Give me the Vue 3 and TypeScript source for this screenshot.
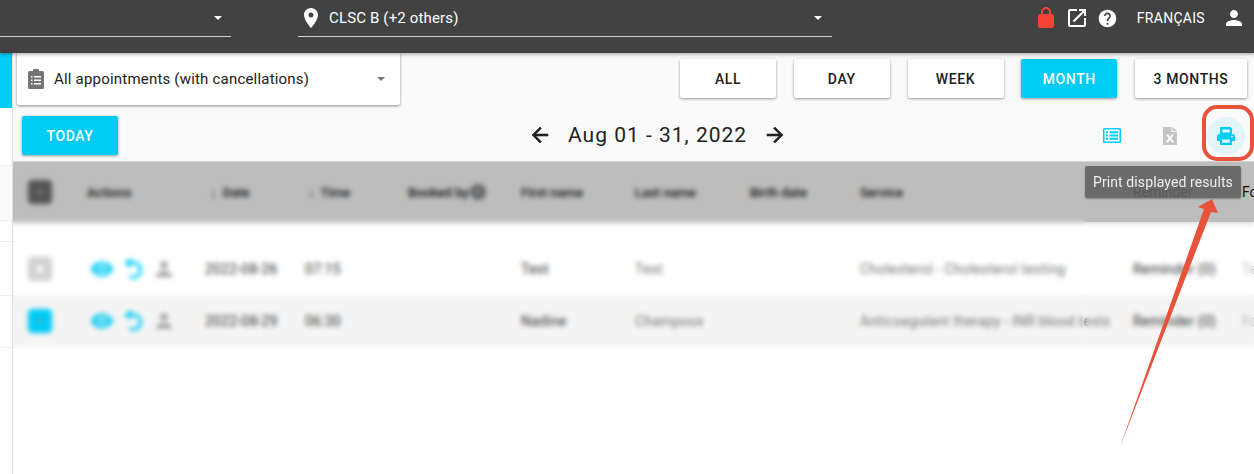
<script setup lang="ts">
const viewButtons = [
  { label: 'ALL', width: 96 },
  { label: 'DAY', width: 96 },
  { label: 'WEEK', width: 96 },
  { label: 'MONTH', width: 96, active: true },
  { label: '3 MONTHS', width: 112 },
]

const columns = ['↓ Date', '↓ Time']
const laterColumns = ['First name', 'Last name', 'Birth date', 'Service']

const rows = [
  { checked: false, date: '2022-08-26', time: '07:15', first: 'Test', last: 'Test', service: 'Cholesterol - Cholesterol testing', reminder: 'Reminder (0)', tail: 'Test' },
  { checked: true, date: '2022-08-29', time: '06:30', first: 'Nadine', last: 'Champoux', service: 'Anticoagulant therapy - INR blood tests', reminder: 'Reminder (0)', tail: 'Fo' },
]

const icons = {
  place: 'M12 2C8.13 2 5 5.13 5 9c0 5.25 7 13 7 13s7-7.75 7-13c0-3.87-3.13-7-7-7zm0 9.5c-1.38 0-2.5-1.12-2.5-2.5s1.12-2.5 2.5-2.5 2.5 1.12 2.5 2.5-1.12 2.5-2.5 2.5z',
  lock: 'M18 8h-1V6c0-2.76-2.24-5-5-5S7 3.24 7 6v2H6c-1.1 0-2 .9-2 2v10c0 1.1.9 2 2 2h12c1.1 0 2-.9 2-2V10c0-1.1-.9-2-2-2zM9 8V6c0-1.66 1.34-3 3-3s3 1.34 3 3v2H9z',
  open: 'M19 19H5V5h7V3H5c-1.11 0-2 .9-2 2v14c0 1.1.89 2 2 2h14c1.1 0 2-.9 2-2v-7h-2v7zM14 3v2h3.59l-9.83 9.83 1.41 1.41L19 6.41V10h2V3h-7z',
  help: 'M12 2C6.48 2 2 6.48 2 12s4.48 10 10 10 10-4.48 10-10S17.52 2 12 2zm1 17h-2v-2h2v2zm2.07-7.75l-.9.92C13.45 12.9 13 13.5 13 15h-2v-.5c0-1.1.45-2.1 1.17-2.83l1.24-1.26c.37-.36.59-.86.59-1.41 0-1.1-.9-2-2-2s-2 .9-2 2H8c0-2.21 1.79-4 4-4s4 1.79 4 4c0 .88-.36 1.68-.93 2.25z',
  person: 'M12 12c2.21 0 4-1.79 4-4s-1.79-4-4-4-4 1.79-4 4 1.79 4 4 4zm0 2c-2.67 0-8 1.34-8 4v2h16v-2c0-2.66-5.33-4-8-4z',
  back: 'M20 11H7.83l5.59-5.59L12 4l-8 8 8 8 1.41-1.41L7.83 13H20v-2z',
  forward: 'M12 4l-1.41 1.41L16.17 11H4v2h12.17l-5.58 5.59L12 20l8-8z',
  eye: 'M12 4.5C7 4.5 2.73 7.61 1 12c1.73 4.39 6 7.5 11 7.5s9.27-3.11 11-7.5c-1.73-4.39-6-7.5-11-7.5zM12 17a5 5 0 1 1 0-10 5 5 0 0 1 0 10zm0-8a3 3 0 1 0 0 6 3 3 0 0 0 0-6z',
  replay: 'M10 4V1L3 6l7 5V7h2c3.31 0 6 2.69 6 6s-2.69 6-6 6c-1 0-2-.2-2.800-.7l-1.400 1.800C9.100 21.600 10.500 22 12 22c4.970 0 9-4.030 9-9s-4.030-9-9-9h-2z',
}
</script>

<template>
  <div class="page">
    <header class="topbar">
      <div class="top-select first">
        <span class="caret"></span>
      </div>
      <div class="top-select second">
        <svg class="place" viewBox="0 0 24 24"><path :d="icons.place" /></svg>
        <span class="top-value">CLSC B (+2 others)</span>
        <span class="caret"></span>
      </div>
      <div class="top-actions">
        <svg class="top-icon lock" viewBox="0 0 24 24"><path :d="icons.lock" /></svg>
        <svg class="top-icon open" viewBox="0 0 24 24"><path :d="icons.open" /></svg>
        <svg class="top-icon help" viewBox="0 0 24 24"><path :d="icons.help" /></svg>
        <span class="lang">FRANÇAIS</span>
        <svg class="top-icon person" viewBox="0 0 24 24"><path :d="icons.person" /></svg>
      </div>
    </header>

    <div class="layout">
      <aside class="sidebar">
        <div class="side-accent"></div>
        <div class="side-block"></div>
        <div class="side-line one"></div>
        <div class="side-line two"></div>
        <div class="side-line three"></div>
      </aside>

      <main class="content">
        <section class="toolbar">
          <div class="toolbar-row upper">
            <div class="filter">
              <svg class="clipboard" viewBox="0 0 16 20">
                <path fill-rule="evenodd" d="M5 2a3 3 0 0 1 6 0h3.500A1.500 1.500 0 0 1 16 3.500v15a1.500 1.500 0 0 1-1.500 1.500h-13A1.500 1.500 0 0 1 0 18.500v-15A1.500 1.500 0 0 1 1.500 2H5zM3 7v1.500h1.500V7H3zm3 0v1.500h7V7H6zm-3 3.500V12h1.500v-1.500H3zm3 0V12h7v-1.500H6zM3 14v1.500h1.500V14H3zm3 0v1.500h7V14H6z" />
              </svg>
              <span class="filter-value">All appointments (with cancellations)</span>
              <span class="caret small"></span>
            </div>
            <div class="views">
              <button
                v-for="b in viewButtons"
                :key="b.label"
                type="button"
                :class="['btn', { active: b.active }]"
                :style="{ width: b.width + 'px' }"
              >{{ b.label }}</button>
            </div>
          </div>

          <div class="toolbar-row lower">
            <button type="button" class="btn active today">TODAY</button>
            <div class="period">
              <svg class="nav-arrow" viewBox="0 0 24 24"><path :d="icons.back" /></svg>
              <span class="period-label">Aug 01 - 31, 2022</span>
              <svg class="nav-arrow" viewBox="0 0 24 24"><path :d="icons.forward" /></svg>
            </div>
            <div class="exports">
              <div class="export-slot">
                <svg class="list-icon" viewBox="0 0 18 15">
                  <path fill-rule="evenodd" d="M1.500 0h15A1.500 1.500 0 0 1 18 1.500v12a1.500 1.500 0 0 1-1.500 1.500h-15A1.500 1.500 0 0 1 0 13.500v-12A1.500 1.500 0 0 1 1.500 0zm0 1.500v12h15v-12h-15zM3 3.200h2v2H3v-2zm3.500 0H15v2H6.500v-2zM3 6.500h2v2H3v-2zm3.500 0H15v2H6.500v-2zM3 9.800h2v2H3v-2zm3.500 0H15v2H6.500v-2z" />
                </svg>
              </div>
              <div class="export-slot">
                <svg class="excel-icon" viewBox="0 0 14 18">
                  <path fill-rule="evenodd" d="M0 0h8.500v5H14v13H0V0zm9.500 0L14 4H9.500V0zM2.800 7.500l2.800 3.700L2.600 15.500h2.600L7 12.700l1.800 2.800h2.600l-3-4.300 2.800-3.700H8.600L7 9.800 5.400 7.500H2.800z" />
                </svg>
              </div>
              <div class="export-slot print">
                <svg class="print-icon" viewBox="0 0 18 18">
                  <path fill-rule="evenodd" d="M3 0h10.500L15 1.500V7h.500A2.500 2.500 0 0 1 18 9.500V14h-3v4H3v-4H0V9.500A2.500 2.500 0 0 1 2.500 7H3V0zm2.200 2.400v3.200h7.600V2.400H5.200zm0 10.100v3.300h7.600v-3.300H5.200zM15 8.500a1 1 0 1 0 0 2 1 1 0 0 0 0-2z" />
                </svg>
              </div>
            </div>
          </div>
        </section>

        <section class="table">
          <div class="grid head">
            <div class="cell"><span class="check head-check"></span></div>
            <div class="cell">Actions</div>
            <div v-for="c in columns" :key="c" class="cell sorted">{{ c }}</div>
            <div class="cell booked">Booked by<span class="info">i</span></div>
            <div v-for="c in laterColumns" :key="c" class="cell">{{ c }}</div>
            <div class="cell reminder-head">Reminder</div>
            <div class="cell form-head">Fo</div>
          </div>
          <div class="spacer"></div>
          <div v-for="(r, i) in rows" :key="r.date" :class="['grid', 'row', { alt: i % 2 === 1 }]">
            <div class="cell"><span :class="['check', { on: r.checked }]"></span></div>
            <div class="cell actions">
              <svg class="act cyan" viewBox="0 0 24 24"><path :d="icons.eye" /></svg>
              <svg class="act cyan" viewBox="0 0 24 24"><path :d="icons.replay" /></svg>
              <svg class="act grey" viewBox="0 0 24 24"><path :d="icons.person" /></svg>
            </div>
            <div class="cell strong date">{{ r.date }}</div>
            <div class="cell strong time">{{ r.time }}</div>
            <div class="cell"></div>
            <div class="cell strong">{{ r.first }}</div>
            <div class="cell light">{{ r.last }}</div>
            <div class="cell"></div>
            <div class="cell light">{{ r.service }}</div>
            <div class="cell strong">{{ r.reminder }}</div>
            <div class="cell faint">{{ r.tail }}</div>
          </div>
        </section>
      </main>
    </div>

    <!-- patient data is blurred on top of the table -->
    <div class="mask mask-main"></div>
    <div class="mask mask-right"></div>

    <div class="tooltip">Print displayed results</div>
    <svg class="annotation" viewBox="0 0 1254 474">
      <rect x="1204" y="107" width="48" height="52" rx="13" fill="none" stroke="#e8523a" stroke-width="4" />
      <path d="M1212 199L1198 207L1204 209L1120 447L1211 212L1218 213Z" fill="#e8523a" />
    </svg>
  </div>
</template>

<style>
html,
body {
  margin: 0;
  background: #fff;
}
</style>

<style scoped>
.page {
  position: relative;
  width: 1254px;
  height: 474px;
  overflow: hidden;
  background: #fff;
  font-family: Roboto, 'Liberation Sans', sans-serif;
  color: #212121;
}

.topbar {
  position: relative;
  z-index: 2;
  display: flex;
  height: 53px;
  background: #424242;
  box-shadow: 0 1px 4px rgba(0, 0, 0, 0.4);
  color: #fff;
}

.top-select {
  display: flex;
  align-items: center;
  height: 37px;
  box-sizing: border-box;
  border-bottom: 1px solid #d0d0d0;
}

.top-select.first {
  width: 231px;
  justify-content: flex-end;
  padding-right: 9px;
}

.top-select.second {
  width: 534px;
  margin-left: 67px;
  padding: 0 10px 0 1px;
}

.place {
  width: 24px;
  height: 24px;
  fill: #fff;
}

.top-value {
  flex: 1;
  margin-left: 6px;
  font-size: 15px;
  letter-spacing: 0.15px;
}

.caret {
  width: 0;
  height: 0;
  border-left: 4px solid transparent;
  border-right: 4px solid transparent;
  border-top: 4px solid #fff;
}

.caret.small {
  border-top-color: #757575;
}

.top-actions {
  display: flex;
  align-items: center;
  height: 36px;
  margin-left: auto;
  padding-right: 8px;
}

.top-icon {
  flex: none;
  width: 24px;
  height: 24px;
  fill: #fff;
}

.top-icon.lock {
  margin-right: 7px;
  fill: #f44336;
}

.top-icon.open {
  margin-right: 8px;
}

.top-icon.help {
  width: 21px;
  height: 21px;
  margin-right: 19px;
}

.lang {
  margin-right: 17px;
  font-size: 14px;
  letter-spacing: 0.3px;
}

.layout {
  display: flex;
  height: 421px;
}

.sidebar {
  position: relative;
  flex: none;
  width: 12px;
  border-right: 1px solid #e0e0e0;
}

.side-accent {
  height: 55px;
  background: #00ccf5;
}

.side-block {
  position: absolute;
  top: 112px;
  left: 0;
  width: 12px;
  height: 56px;
  box-sizing: border-box;
  border-top: 1px solid #efefef;
  border-bottom: 1px solid #efefef;
  background: #fafafa;
}

.side-line {
  position: absolute;
  left: 0;
  width: 12px;
  height: 1px;
  background: #efefef;
}

.side-line.one { top: 188px; }
.side-line.two { top: 242px; }
.side-line.three { top: 294px; }

.content {
  flex: 1;
  min-width: 0;
}

.toolbar {
  display: flex;
  flex-direction: column;
  height: 109px;
  box-sizing: border-box;
  background: #fafafa;
  border-bottom: 1px solid #dcdcdc;
}

.toolbar-row {
  display: flex;
}

.upper {
  align-items: flex-start;
  height: 63px;
  padding: 0 7px 0 4px;
}

.filter {
  display: flex;
  align-items: center;
  width: 383px;
  height: 52px;
  box-sizing: border-box;
  padding: 0 15px 0 11px;
  background: #fff;
  border-radius: 0 0 2px 2px;
  box-shadow: 0 1px 3px rgba(0, 0, 0, 0.45);
}

.clipboard {
  width: 16px;
  height: 20px;
  fill: #757575;
}

.filter-value {
  flex: 1;
  margin-left: 10px;
  font-size: 15px;
  letter-spacing: 0.2px;
}

.views {
  display: flex;
  gap: 17.75px;
  margin: 6px 0 0 auto;
}

.btn {
  height: 39px;
  padding: 0;
  border: 0;
  border-radius: 2px;
  background: #fff;
  color: #212121;
  font: 500 14px Roboto, sans-serif;
  letter-spacing: 0.6px;
  box-shadow: 0 1px 3px rgba(0, 0, 0, 0.4);
}

.btn.active {
  background: #00ccf5;
  color: #fff;
}

.lower {
  align-items: center;
  height: 39px;
  padding-left: 9px;
}

.today {
  width: 96px;
}

.period {
  display: flex;
  align-items: center;
  margin: 0 0 2px 410px;
}

.nav-arrow {
  width: 24px;
  height: 24px;
  fill: #212121;
  stroke: #212121;
  stroke-width: 0.6;
}

.period-label {
  margin: 0 16px;
  font-size: 21px;
  letter-spacing: 1px;
}

.exports {
  display: flex;
  margin-left: auto;
  margin-right: 9px;
}

.export-slot {
  display: flex;
  align-items: center;
  justify-content: center;
  width: 38px;
  height: 38px;
  margin-left: 20px;
  border-radius: 50%;
}

.export-slot.print {
  margin-left: 18px;
  background: #e3f4fb;
}

.list-icon {
  width: 18px;
  height: 15px;
  fill: #00ccf5;
}

.excel-icon {
  width: 14px;
  height: 18px;
  fill: #c4c4c4;
}

.print-icon {
  width: 18px;
  height: 18px;
  fill: #00ccf5;
}

.grid {
  display: grid;
  grid-template-columns: 74px 123px 98px 100px 113px 114px 115px 110px 273px 109px 1fr;
  align-items: center;
  white-space: nowrap;
  font-size: 13px;
}

.head {
  height: 60px;
  background: #bdbdbd;
  box-shadow: 0 1px 3px rgba(0, 0, 0, 0.2);
  font-weight: 500;
  color: #111;
}

.sorted {
  word-spacing: 3px;
}

.booked {
  display: flex;
  align-items: center;
}

.info {
  display: block;
  width: 16px;
  height: 16px;
  margin-left: 1px;
  border-radius: 50%;
  background: #666;
  color: #bdbdbd;
  font-size: 11px;
  line-height: 16px;
  text-align: center;
}

.reminder-head {
  font-weight: 400;
  font-size: 14px;
  color: #222;
}

.form-head {
  font-weight: 400;
  font-size: 14px;
  color: #111;
}

.spacer {
  height: 21px;
}

.row {
  height: 52px;
  font-size: 14px;
  letter-spacing: 0.2px;
}

.row.alt {
  background: #f4f4f4;
}

.cell {
  min-width: 0;
}

.strong {
  color: #333;
}

.light {
  color: #777;
}

.faint {
  color: #bbb;
}

.date {
  margin-left: -5px;
}

.time {
  margin-left: -3px;
}

.check {
  display: block;
  width: 24px;
  height: 24px;
  margin-left: 15px;
  box-sizing: border-box;
  border: 9px solid #d2d2d2;
  border-radius: 4px;
  background: #fff;
}

.check.head-check {
  border-color: #555;
  background: #666;
}

.check.on {
  border-color: #00ccf5;
  background: #33b8d8;
}

.actions {
  display: flex;
  gap: 7px;
  margin-left: 3px;
}

.act {
  width: 24px;
  height: 24px;
}

.act.cyan {
  fill: #00ccf5;
}

.act.grey {
  fill: #a8a8a8;
}

.mask {
  position: absolute;
  z-index: 1;
  -webkit-backdrop-filter: blur(2.5px);
  backdrop-filter: blur(2.5px);
}

.mask-main {
  top: 164px;
  left: 13px;
  width: 1072px;
  height: 190px;
}

.mask-right {
  top: 222px;
  left: 1085px;
  width: 169px;
  height: 132px;
}

.tooltip {
  position: absolute;
  z-index: 3;
  top: 166px;
  left: 1085px;
  width: 156px;
  height: 32px;
  box-sizing: border-box;
  padding: 0 8px;
  border-radius: 2px;
  background: rgba(96, 96, 96, 0.9);
  color: #eee;
  font-size: 14px;
  line-height: 32px;
  letter-spacing: 0.1px;
  white-space: nowrap;
  box-shadow: 0 1px 2px rgba(0, 0, 0, 0.3);
}

.annotation {
  position: absolute;
  z-index: 4;
  inset: 0;
  width: 1254px;
  height: 474px;
  pointer-events: none;
}
</style>
